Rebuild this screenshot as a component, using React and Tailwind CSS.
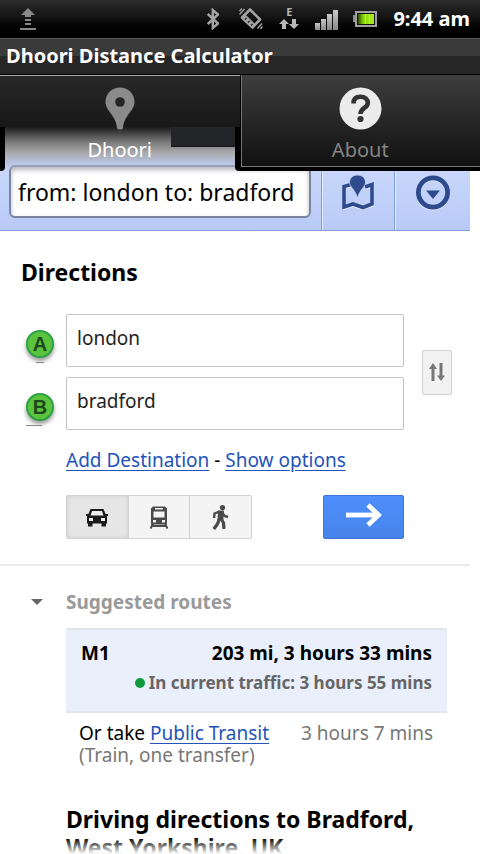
import React, { useState } from 'react';

const UploadIcon = () => (
  <svg width="16" height="22" viewBox="0 0 16 22" fill="#8a8a8a">
    <path d="M8 0 L15 7 H11 V9 H5 V7 H1 Z" />
    <path d="M5 11h6v2H5zM5 15h6v2H5zM0 20h16v2H0z" />
  </svg>
);

const BluetoothIcon = () => (
  <svg width="12" height="22" viewBox="0 0 12 22" fill="none" stroke="#a3a3a3" strokeWidth="2.4">
    <path d="M0.8 6 L11 15.5 L5.8 20 V2 L11 6.5 L0.8 16" />
  </svg>
);

const VibrateIcon = () => (
  <svg width="24" height="22" viewBox="0 0 24 22" fill="none" stroke="#a3a3a3">
    <path d="M11 1.5 L21 11.500 L13.5 19.500 L3 9.5 Z" strokeWidth="2.600" strokeLinejoin="round" />
    <path d="M4 10 L13.500 19 L16 16.500 L7 7.500 Z" fill="#a3a3a3" strokeWidth="1" />
    <path d="M6 11.500l1.500 -1.500M9 14.500l1.500 -1.500M12 17.500l1.500 -1.500" stroke="#222" strokeWidth="1.400" />
    <path d="M0.500 6.500 L5.500 1 M0.500 3 L3 0.500 M18.500 20.500 L23 15.500 M21.500 21 L23.500 18.500" strokeWidth="1.400" />
  </svg>
);

const DataArrows = () => (
  <svg width="20" height="10" viewBox="0 0 20 10" fill="#b8b8b8">
    <path d="M5 0 L10 5 H7 V10 H3 V5 H0 Z" />
    <path d="M15 10 L20 5 H17 V0 H13 V5 H10 Z" />
  </svg>
);

const SignalIcon = () => (
  <svg width="24" height="21" viewBox="0 0 24 21">
    <defs>
      <linearGradient id="bars" x1="0" y1="0" x2="0" y2="1">
        <stop offset="0" stopColor="#c8c8c8" />
        <stop offset="1" stopColor="#8a8a8a" />
      </linearGradient>
    </defs>
    <g fill="url(#bars)">
      <rect x="0" y="14" width="5" height="7" />
      <rect x="6" y="10" width="5" height="11" />
      <rect x="12" y="5" width="5" height="16" />
      <rect x="18" y="1" width="5" height="20" />
    </g>
  </svg>
);

const BatteryIcon = () => (
  <svg width="24" height="16" viewBox="0 0 24 16">
    <defs>
      <linearGradient id="charge" x1="0" y1="0" x2="1" y2="0">
        <stop offset="0" stopColor="#2f4d00" />
        <stop offset="0.350" stopColor="#8ed80a" />
        <stop offset="1" stopColor="#a8ec1c" />
      </linearGradient>
    </defs>
    <rect x="0" y="4" width="3" height="7" fill="#8a8a8a" />
    <rect x="3" y="1" width="20" height="14" fill="#111" stroke="#a0a0a0" strokeWidth="2" />
    <rect x="5" y="3" width="16" height="10" fill="url(#charge)" />
    <path d="M12.500 3v10M16.500 3v10" stroke="#c6f56a" strokeWidth="0.800" />
  </svg>
);

const PinIcon = () => (
  <svg width="30" height="43" viewBox="0 0 30 43">
    <path d="M15 0.500 C6.500 0.500 0.500 7 0.500 15 C0.500 24 11 28 12 41 Q12.200 42.500 15 42.500 Q17.800 42.500 18 41 C19 28 29.500 24 29.500 15 C29.500 7 23.500 0.500 15 0.500 Z" fill="#8a8a8a" />
    <circle cx="15" cy="15" r="4.800" fill="#242424" />
  </svg>
);

const HelpIcon = () => (
  <svg width="43" height="43" viewBox="0 0 43 43">
    <circle cx="21.500" cy="21.500" r="21" fill="#ebebeb" />
    <path d="M14.500 16.500 C14.500 11.500 17.500 9.800 21.500 9.800 C26 9.800 28.800 12 28.800 16 C28.800 21 21.500 21 21.500 27" fill="none" stroke="#333" strokeWidth="4.600" />
    <circle cx="21.500" cy="32" r="3.100" fill="#333" />
  </svg>
);

const MapIcon = () => (
  <svg width="32" height="35" viewBox="0 0 32 35">
    <path d="M9 10.500 L2 12.500 V33 L11 30 L21 33.500 L30 30 V10.500 L23 13" fill="none" stroke="#e8effd" strokeWidth="3.600" />
    <path d="M9 9.500 L2 11.500 V32 L11 29 L21 32.500 L30 29 V9.500 L23 12" fill="none" stroke="#2d4a8c" strokeWidth="3.600" />
    <path d="M15.500 0 C10.500 0 7.500 3.500 7.500 7.500 C7.500 12 13 14 15.500 23 C18 14 23.500 12 23.500 7.500 C23.500 3.500 20.500 0 15.500 0 Z" fill="#2d4a8c" stroke="#c5d3f9" strokeWidth="0.800" />
  </svg>
);

const MenuIcon = () => (
  <svg width="36" height="36" viewBox="0 0 36 36">
    <circle cx="18" cy="18.800" r="14.700" fill="none" stroke="#eaf0fe" strokeWidth="4" />
    <circle cx="18" cy="17.500" r="14.600" fill="none" stroke="#2d4a8c" strokeWidth="4.800" />
    <path d="M11 15.500 H25 L18 24 Z" fill="#2d4a8c" />
  </svg>
);

const SwapIcon = () => (
  <svg width="16" height="19" viewBox="0 0 16 19" fill="#777">
    <path d="M4 0 L8 6 H5.500 V18 H2.500 V6 H0 Z" />
    <path d="M12 18 L16 12.500 H13.500 V0 H10.500 V12.500 H8 Z" />
  </svg>
);

const CarIcon = () => (
  <svg width="22" height="19" viewBox="0 0 22 19">
    <path d="M4.500 1 H17.500 L20 7 L21 8.500 V15.500 H20 V18.500 H15.500 V15.500 H6.500 V18.500 H2 V15.500 H1 V8.500 L2 7 Z" fill="#1c1c1c" />
    <path d="M6 3 H16 L17.500 7.500 H4.500 Z" fill="#eee" />
    <path d="M0 6h3v2H0zM19 6h3v2h-3z" fill="#1c1c1c" />
    <path d="M3 10h4v3H3zM15 10h4v3h-4z" fill="#eee" />
  </svg>
);

const BusIcon = () => (
  <svg width="18" height="23" viewBox="0 0 18 23">
    <path d="M3 0.500 H15 L17 2.500 V18.500 H1 V2.500 Z" fill="#4a4a4a" />
    <path d="M5 2h8v1.500H5zM3.500 5.500h11v6h-11z" fill="#f5f5f5" />
    <path d="M3 14h3v2.500H3zM12 14h3v2.500h-3z" fill="#f5f5f5" />
    <path d="M3 18 L0.500 22.500 M15 18 L17.500 22.500 M3 20 H15" stroke="#4a4a4a" strokeWidth="2" />
  </svg>
);

const WalkIcon = () => (
  <svg width="17" height="25" viewBox="0 0 17 25" fill="none" stroke="#4a4a4a">
    <circle cx="10.500" cy="2.700" r="2.600" fill="#4a4a4a" stroke="none" />
    <path d="M6 5.500 H12 L11.300 15 H5.500 Z" fill="#4a4a4a" stroke="none" />
    <path d="M7.500 6.500 L2.500 8.500 L2 13" strokeWidth="2.400" />
    <path d="M10.500 7.500 L12.500 11 L16 12" strokeWidth="2.400" />
    <path d="M7.300 14 L5.500 19 L1.800 24" strokeWidth="3.200" />
    <path d="M9 13.500 L11.500 18 L12 24" strokeWidth="3.200" />
  </svg>
);

const GoArrow = () => (
  <svg width="36" height="24" viewBox="0 0 36 24" fill="none" stroke="#fff" strokeWidth="4.800">
    <path d="M0 12 H32" />
    <path d="M22 2 L32.500 12 L22 22" />
  </svg>
);

const StatusBar = () => (
  <div className="flex h-[38px] items-center bg-linear-to-b from-[#2c2c2c] via-[#111] to-black pl-5 pr-[10px]">
    <UploadIcon />
    <div className="ml-auto flex items-center">
      <BluetoothIcon />
      <span className="ml-5"><VibrateIcon /></span>
      <span className="ml-4 flex w-5 flex-col items-center gap-0.5 pb-0.5">
        <span className="text-[11px] font-bold leading-[10px] text-[#b8b8b8]">E</span>
        <DataArrows />
      </span>
      <span className="ml-4"><SignalIcon /></span>
      <span className="ml-[14px]"><BatteryIcon /></span>
      <span className="ml-4 text-[20px] font-bold leading-6 text-white">9:44 am</span>
    </div>
  </div>
);

const TabBar = () => (
  <nav className="relative z-10 flex h-24 text-[20px] leading-6">
    <button className="relative flex flex-1 flex-col items-center border-t border-[#aaa] bg-[linear-gradient(to_bottom,#282828_0%,#181818_53%,#7c7c7c_70%,#a6a6a6_80%,#b4bdd6e0_90%,transparent_100%)] pt-[11px] text-white">
      <span className="absolute bottom-0 left-0 h-11 w-[5px] rounded-br bg-black" />
      <span className="absolute bottom-0 right-0 h-11 w-[5px] rounded-bl bg-black" />
      <span className="absolute right-[5px] top-[51px] h-5 w-16 border-b border-[#15171a] bg-[#232528]" />
      <PinIcon />
      <span className="relative mt-2">Dhoori</span>
    </button>
    <button className="flex flex-1 flex-col items-center border-b-4 border-l border-black bg-linear-to-b from-[#3e3e3e] to-[#111] pt-3 text-[#858585] shadow-[inset_1px_-1px_0_#777]">
      <HelpIcon />
      <span className="mt-2">About</span>
    </button>
  </nav>
);

const SearchBar = () => {
  const [query, setQuery] = useState('from: london to: bradford');
  return (
    <div className="-mt-11 mr-[10px] flex h-[104px] border-b border-[#7f9fd6] bg-linear-to-b from-[#d3dffc] to-[#b9caf7]">
      <div className="flex-1 pb-3 pl-[9px] pr-[10px] pt-[38px]">
        <input
          type="text"
          aria-label="Search"
          value={query}
          onChange={(e) => setQuery(e.target.value)}
          className="h-full w-full rounded-md border-2 border-[#7884a0] bg-white px-[7px] text-[23px] text-black shadow-[inset_0_3px_5px_#bbb] outline-none"
        />
      </div>
      <button aria-label="Map" className="flex w-[73px] justify-center border-l border-[#7f9fd6] pt-[48px] shadow-[inset_1px_0_0_#e4ecfe]">
        <MapIcon />
      </button>
      <button aria-label="Menu" className="flex w-[76px] justify-center border-l border-[#7f9fd6] pt-[48px] shadow-[inset_1px_0_0_#e4ecfe]">
        <MenuIcon />
      </button>
    </div>
  );
};

const PlaceRow = ({ letter, value, onChange, lineClass }) => (
  <div className="flex items-center">
    <label htmlFor={`place-${letter}`} className="relative mr-3 mt-[6px] flex size-7 items-center justify-center rounded-full border-2 border-[#2aa344] bg-[#5cc43c] font-['Liberation_Sans'] text-[20px] font-bold leading-6 text-[#1d4a1d] shadow-[0_3px_4px_#999]">
      {letter}
      <span className={`absolute -bottom-[7px] h-px bg-[#888] ${lineClass}`} />
    </label>
    <input
      id={`place-${letter}`}
      type="text"
      value={value}
      onChange={(e) => onChange(e.target.value)}
      className="h-[53px] min-w-0 flex-1 rounded-xs border border-[#c4c4c4] bg-white px-[10px] pb-1.5 text-[19px] text-[#222] outline-none"
    />
  </div>
);

const modes = [
  { id: 'Driving', Icon: CarIcon },
  { id: 'Transit', Icon: BusIcon },
  { id: 'Walking', Icon: WalkIcon },
];

const DirectionsForm = () => {
  const [from, setFrom] = useState('london');
  const [to, setTo] = useState('bradford');
  const [mode, setMode] = useState('Driving');

  const swap = () => {
    setFrom(to);
    setTo(from);
  };

  return (
    <section className="mr-[10px] border-b-2 border-[#ebebeb] pb-[25px] pt-[25px]">
      <h1 className="pl-[21px] text-[23px] font-bold leading-8">Directions</h1>

      <div className="mt-[26px] flex items-center pl-[26px] pr-[18px]">
        <div className="flex min-w-0 flex-1 flex-col gap-[10px]">
          <PlaceRow letter="A" value={from} onChange={setFrom} lineClass="w-2" />
          <PlaceRow letter="B" value={to} onChange={setTo} lineClass="-left-0.5 w-4" />
        </div>
        <button onClick={swap} aria-label="Swap" className="ml-[18px] flex h-[45px] w-[30px] items-center justify-center rounded-xs border border-[#d0d0d0] bg-[#f2f2f2]">
          <SwapIcon />
        </button>
      </div>

      <p className="mt-[17px] pl-[66px] text-[19px] leading-[26px]">
        <a href="#add" className="text-[#2353b8] underline underline-offset-3">Add Destination</a>
        {' - '}
        <a href="#options" className="text-[#2353b8] underline underline-offset-3">Show options</a>
      </p>

      <div className="mt-[22px] flex justify-between pl-[66px] pr-[66px]">
        <div className="flex h-11 w-[186px] overflow-hidden rounded-xs border border-[#d2d2d2]">
          {modes.map(({ id, Icon }) => (
            <button
              key={id}
              aria-label={id}
              onClick={() => setMode(id)}
              className={`flex flex-1 items-center justify-center border-l border-[#d2d2d2] first:border-l-0 ${
                mode === id ? 'bg-[#e6e6e6] shadow-[inset_0_0_4px_#ccc]' : 'bg-[#f4f4f4]'
              }`}
            >
              <Icon />
            </button>
          ))}
        </div>
        <button aria-label="Get directions" className="flex h-11 w-[81px] items-center justify-center rounded-xs border border-[#3a74dc] bg-linear-to-b from-[#4d8ffb] to-[#4684ea] pb-1">
          <GoArrow />
        </button>
      </div>
    </section>
  );
};

const Routes = () => (
  <section className="mr-[10px] pt-[22px]">
    <div className="flex items-center pl-[31px]">
      <svg width="12" height="6" viewBox="0 0 12 6"><path d="M0 0h12L6 6z" fill="#666" /></svg>
      <h2 className="pl-[23px] text-[19px] font-bold leading-7 text-[#999]">Suggested routes</h2>
    </div>

    <div className="ml-[66px] mr-[23px] mt-3 h-[85px] border-y-2 border-[#e2e5ec] bg-[#eaf0fb] px-[15px] pt-[9px] font-bold">
      <div className="flex justify-between text-[19px] leading-7">
        <span>M1</span>
        <span>203 mi, 3 hours 33 mins</span>
      </div>
      <div className="mt-1 flex items-center justify-end gap-1 text-[17px] leading-6 text-[#666]">
        <span className="size-[10px] rounded-full bg-[#0e9a3c]" />
        In current traffic: 3 hours 55 mins
      </div>
    </div>

    <div className="ml-[79px] mr-[37px] mt-[9px] flex justify-between text-[19px] leading-[22px] text-[#777]">
      <div>
        <span className="text-black">Or take <a href="#transit" className="text-[#2353b8] underline underline-offset-3">Public Transit</a></span>
        <br />
        (Train, one transfer)
      </div>
      <span>3 hours 7 mins</span>
    </div>

    <h2 className="ml-[66px] mr-[23px] mt-[39px] text-[23px] font-bold leading-7">
      Driving directions to Bradford, West Yorkshire, UK
    </h2>
  </section>
);

export default function App() {
  return (
    <div className="relative h-screen overflow-hidden bg-white font-['Noto_Sans',sans-serif] text-black">
      <StatusBar />
      <header className="flex h-[37px] items-center border-b border-black border-t border-t-[#555] bg-linear-to-b from-[#3a3a3a] from-50% to-[#262626] to-50% pb-0.5 pl-[6px] text-[20px] font-bold text-white">
        Dhoori Distance Calculator
      </header>
      <TabBar />
      <SearchBar />
      <DirectionsForm />
      <Routes />
      <div className="absolute inset-x-0 bottom-0 h-4 bg-linear-to-b from-transparent to-white" />
    </div>
  );
}
